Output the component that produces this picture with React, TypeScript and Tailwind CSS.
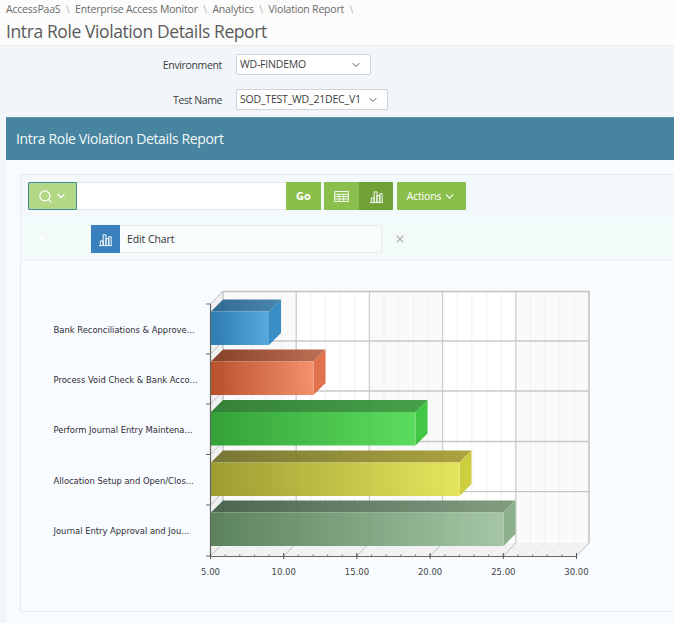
import React from 'react';
import { ChevronDown, Search, X } from 'lucide-react';

const bars = [
  { id: 'blue', label: 'Bank Reconciliations & Approve...', labelY: 332.5, y: 311.5, end: 269, from: '#2275ad', to: '#4fa6de', side: '#2f88c3', topFrom: '#25628f', topTo: '#3f7fa8' },
  { id: 'red', label: 'Process Void Check & Bank Acco...', labelY: 382.5, y: 361.5, end: 313.5, from: '#b4471f', to: '#f58b65', side: '#e06a40', topFrom: '#80371d', topTo: '#bb684b' },
  { id: 'green', label: 'Perform Journal Entry Maintena...', labelY: 432.5, y: 412, end: 415.5, from: '#299d2d', to: '#53dc56', side: '#36c33b', topFrom: '#2a7a2e', topTo: '#3b9c3f' },
  { id: 'yellow', label: 'Allocation Setup and Open/Clos...', labelY: 483.5, y: 462.5, end: 459.5, from: '#979726', to: '#e5e553', side: '#cbcb36', topFrom: '#70702a', topTo: '#a99f36' },
  { id: 'sage', label: 'Journal Entry Approval and Jou...', labelY: 533.5, y: 512.5, end: 503.5, from: '#527c54', to: '#a0c4a0', side: '#86ad86', topFrom: '#435c45', topTo: '#7b977a' },
];

const major = [210.5, 283.7, 356.9, 430.1, 503.3, 576.5];
const values = ['5.00', '10.00', '15.00', '20.00', '25.00', '30.00'];
const minor = Array.from({ length: 26 }, (_, i) => 210.5 + i * 14.64);
const rows = [304, 354, 404, 454.5, 505];

function BarIcon({ className }: { className: string }) {
  return (
    <svg viewBox="0 0 16 16" className={className} fill="none" stroke="currentColor" strokeWidth="1">
      <path d="M1 14.5h14M2.5 14V9.5h3V14M5.5 14V3h3v11M8.5 14V7h3v7M11.5 14V5h2.5v9" />
    </svg>
  );
}

function TableIcon() {
  return (
    <svg viewBox="0 0 16 12" className="w-[15px] h-[11px]" fill="none" stroke="white" strokeWidth="1">
      <path d="M.5.5h15v11H.5zM.5 3.5h15M.5 6h15M.5 8.7h15M5.5 3.5v8M10.5 3.5v8" />
    </svg>
  );
}

function Chart() {
  return (
    <svg viewBox="21 261 653 350" className="block w-[653px] h-[350px]">
      <defs>
        {bars.map((b) => (
          <React.Fragment key={b.id}>
            <linearGradient id={`${b.id}-front`}>
              <stop offset="0" stopColor={b.from} />
              <stop offset="1" stopColor={b.to} />
            </linearGradient>
            <linearGradient id={`${b.id}-top`}>
              <stop offset="0" stopColor={b.topFrom} />
              <stop offset="1" stopColor={b.topTo} />
            </linearGradient>
          </React.Fragment>
        ))}
      </defs>

      {/* back wall */}
      <rect x="223" y="291" width="366" height="252" fill="#fafafa" />
      <rect x="296.2" y="291" width="73.2" height="252" fill="#fff" />
      <rect x="442.6" y="291" width="73.2" height="252" fill="#fff" />
      {minor.map((x) => (
        <line key={x} x1={x + 12.5} y1="291" x2={x + 12.5} y2="543" stroke="#f1f1f1" />
      ))}
      {major.slice(1, 5).map((x) => (
        <line key={x} x1={x + 12.5} y1="291" x2={x + 12.5} y2="543" stroke="#cccccc" strokeWidth="1.3" />
      ))}
      {[341, 391, 441.5, 491.7].map((y) => (
        <line key={y} x1="223" y1={y} x2="589" y2={y} stroke="#c8c8c8" strokeWidth="1.3" />
      ))}
      <path d="M223 291.5H589V543" fill="none" stroke="#c4c4c4" strokeWidth="1.5" />

      {/* left wall and floor */}
      <polygon points="210.5,304 223,291 223,543 210.5,556" fill="#f1f1f1" />
      <polygon points="210.5,556 223,543 589,543 576.5,556" fill="#f2f2f2" />
      {rows.map((y) => (
        <line key={y} x1="210.5" y1={y} x2="223" y2={y - 13} stroke="#bdbdbd" />
      ))}
      <line x1="223" y1="291" x2="223" y2="543" stroke="#c4c4c4" strokeWidth="1.3" />
      {minor.map((x) => (
        <line key={x} x1={x} y1="556" x2={x + 12.5} y2="543" stroke="#e8e8e8" />
      ))}
      {major.map((x) => (
        <line key={x} x1={x} y1="556" x2={x + 12.5} y2="543" stroke="#c4c4c4" />
      ))}

      {/* bars */}
      {bars.map((b) => (
        <g key={b.id} opacity="0.94">
          <polygon points={`211,${b.y} 223,${b.y - 12} ${b.end + 12},${b.y - 12} ${b.end},${b.y}`} fill={`url(#${b.id}-top)`} />
          <polygon points={`${b.end},${b.y} ${b.end + 12},${b.y - 12} ${b.end + 12},${b.y + 21.5} ${b.end},${b.y + 33.5}`} fill={b.side} />
          <rect x="211" y={b.y} width={b.end - 211} height="33.5" fill={`url(#${b.id}-front)`} />
        </g>
      ))}

      {/* axes */}
      <path d="M210.5 304V556.5H576.5" fill="none" stroke="#666666" strokeWidth="1.2" />
      {[...rows, 556].map((y) => (
        <line key={y} x1="206" y1={y} x2="210.5" y2={y} stroke="#666666" />
      ))}
      {minor.map((x) => (
        <line key={x} x1={x} y1="554.5" x2={x} y2="556" stroke="#777777" />
      ))}
      {major.map((x) => (
        <line key={x} x1={x} y1="553" x2={x} y2="559" stroke="#555555" />
      ))}

      {bars.map((b) => (
        <text key={b.id} x="53.5" y={b.labelY} fontSize="8.4" fill="#2f2a38" className="font-['DejaVu_Sans',sans-serif]">
          {b.label}
        </text>
      ))}
      {values.map((v, i) => (
        <text key={v} x={major[i]} y="575" fontSize="8.5" fill="#3f3f46" textAnchor="middle" className="font-['DejaVu_Sans',sans-serif]">
          {v}
        </text>
      ))}
    </svg>
  );
}

const App: React.FC = () => {
  return (
    <div className="w-[674px] h-[623px] overflow-hidden bg-[#f2f6fa] font-['Open_Sans',sans-serif]">
      <header className="h-[46px] bg-[#fcfcfc] border-b border-[#e6ebef] pl-[6px]">
        <div className="flex items-center gap-[5.5px] pt-[1px] text-[10.5px] tracking-[-0.2px] leading-[16px] text-[#6b6b6b]">
          <span>AccessPaaS</span>
          <span className="text-[#b5b5b5]">\</span>
          <span>Enterprise Access Monitor</span>
          <span className="text-[#b5b5b5]">\</span>
          <span>Analytics</span>
          <span className="text-[#b5b5b5]">\</span>
          <span>Violation Report</span>
          <span className="text-[#b5b5b5]">\</span>
        </div>
        <h1 className="text-[17.5px] tracking-[-0.4px] leading-[26px] mt-[1px] text-[#5a5a5a] font-normal">Intra Role Violation Details Report</h1>
      </header>

      <div className="h-[71px] pt-[8px] text-[10.5px] tracking-[-0.2px] text-[#3d3d3d]">
        <div className="flex items-center h-[21px]">
          <span className="w-[222px] pt-[2px] text-right tracking-[-0.35px]">Environment</span>
          <div className="ml-[14px] w-[135px] h-[21px] flex items-center justify-between bg-white border border-[#cfd4d8] rounded-[2px] pl-[3px] pr-[8px]">
            <span className="pt-[1px]">WD-FINDEMO</span>
            <ChevronDown className="w-[12px] h-[12px] text-[#555]" />
          </div>
        </div>
        <div className="flex items-center h-[21px] mt-[14px]">
          <span className="w-[222px] pt-[2px] text-right tracking-[-0.4px]">Test Name</span>
          <div className="ml-[14px] w-[152px] h-[21px] flex items-center justify-between bg-white border border-[#cfd4d8] rounded-[2px] pl-[3px] pr-[8px]">
            <span className="pt-[1px]">SOD_TEST_WD_21DEC_V1</span>
            <ChevronDown className="w-[12px] h-[12px] text-[#555]" />
          </div>
        </div>
      </div>

      <div className="ml-[6px] h-[506px] bg-[#f8fcfe]">
        <div className="h-[43px] flex items-center pl-[10px] pb-[1px] bg-[#46849f] border-t border-[#5d94ab] text-[14px] tracking-[-0.35px] text-[#f4f8fa]">
          Intra Role Violation Details Report
        </div>

        <section className="ml-[14px] mt-[14px] h-[438px] border border-[#e6ecef] border-r-0">
          <div className="h-[43px] bg-[#f3f8fa] pt-[7px] pl-[7px] flex items-start">
            <button className="w-[49px] h-[28px] flex items-center justify-center gap-[2px] bg-[#b2d785] border border-[#3f8a98] rounded-[1px] text-white">
              <Search className="w-[15px] h-[15px]" strokeWidth={2} />
              <ChevronDown className="w-[12px] h-[12px]" strokeWidth={2.5} />
            </button>
            <div className="w-[209px] h-[28px] bg-white border-y border-[#e1e6ea]" />
            <button className="w-[35px] h-[28px] bg-[#8bbf4c] text-white text-[11px] font-bold">Go</button>
            <div className="ml-[3px] flex h-[28px] rounded-[1px] overflow-hidden">
              <div className="w-[35px] flex items-center justify-center bg-[#8bbf4c]">
                <TableIcon />
              </div>
              <div className="w-[34px] flex items-center justify-center bg-[#6fa136] text-white">
                <BarIcon className="w-[15px] h-[15px]" />
              </div>
            </div>
            <button className="ml-[4px] w-[69px] h-[28px] flex items-center justify-center gap-[2px] bg-[#8bbf4c] rounded-[1px] text-white text-[10.5px] tracking-[-0.2px]">
              <span className="pt-[2px]">Actions</span>
              <ChevronDown className="w-[13px] h-[13px]" strokeWidth={2} />
            </button>
          </div>

          <div className="h-[43px] bg-[#f2fafa] border-b border-[#e8f0f1] relative flex items-center pl-[70px]">
            <span className="absolute left-[17px] top-[18px] w-0 h-0 border-x-[4px] border-x-transparent border-t-[5px] border-t-white" />
            <div className="w-[291px] h-[28px] flex items-center bg-[#f9fcfd] border-y border-r border-[#e8edef]">
              <div className="w-[29px] h-[28px] flex items-center justify-center bg-[#3a80bd] text-white">
                <BarIcon className="w-[15px] h-[15px]" />
              </div>
              <span className="ml-[7px] pt-[1px] text-[10.5px] tracking-[-0.1px] text-[#333]">Edit Chart</span>
            </div>
            <X className="ml-[12px] w-[12px] h-[12px] text-[#b3b3b3]" strokeWidth={2.5} />
          </div>

          <Chart />
        </section>
      </div>
    </div>
  );
};

export default App;
